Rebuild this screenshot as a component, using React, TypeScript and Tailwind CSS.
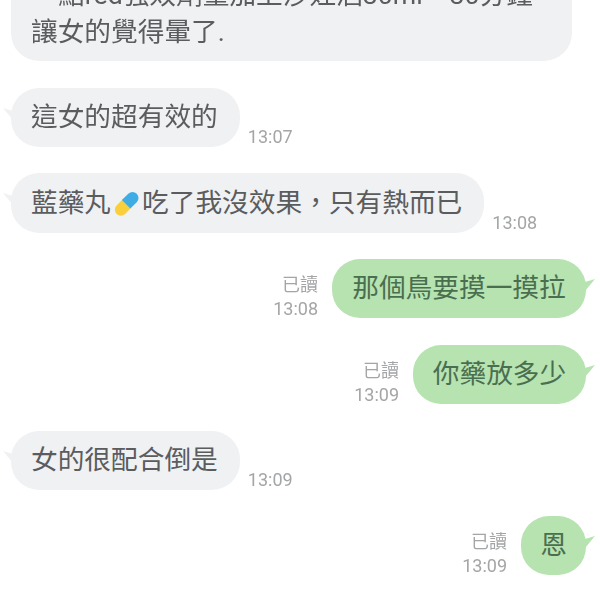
import React from "react";

const cjk = "font-['Roboto','Noto_Sans_CJK_TC',sans-serif]";

const Pill = () => (
  <svg viewBox="0 0 31 28" className="inline-block w-[31px] h-[28px] align-[-6px]">
    <g transform="rotate(-45 15.5 14)">
      <path d="M15 8h-9a6 6 0 0 0 0 12h9z" fill="#f9cf3b" transform="translate(1.5 0)" />
      <path d="M16 8h9a6 6 0 0 1 0 12h-9z" fill="#3fade4" transform="translate(-1 0)" />
    </g>
  </svg>
);

const Tail = ({ side, color }: { side: "left" | "right"; color: string }) => (
  <svg
    viewBox="0 0 10 12"
    className={`absolute top-[20px] w-[10px] h-[12px] ${side === "left" ? "-left-[8px]" : "-right-[9px] -scale-x-100"}`}
  >
    <path d="M10 3 L0 0 L10 12 Z" fill={color} />
  </svg>
);

const Incoming = ({ time, height = "h-[59px]", mt, children }: { time: string; height?: string; mt: string; children: React.ReactNode }) => (
  <div className={`flex items-end pl-[11px] ${mt}`}>
    <div className={`relative ${height} rounded-[28px] bg-[#f0f1f3] pl-[20px] pr-[22px] flex items-center text-[26.7px] text-[#5a5c5e] whitespace-nowrap`}>
      <Tail side="left" color="#f0f1f3" />
      <span>{children}</span>
    </div>
    <span className="ml-[8px] text-[18px] leading-[21px] text-[#a3a5a7]">{time}</span>
  </div>
);

const Outgoing = ({ time, width, mt, children }: { time: string; width: string; mt: string; children: React.ReactNode }) => (
  <div className={`flex items-end justify-end pr-[14px] ${mt}`}>
    <div className="flex flex-col items-end mr-[14px] -mb-[3px] text-[18px] leading-[24px] text-[#a3a5a7]">
      <span>已讀</span>
      <span>{time}</span>
    </div>
    <div className={`relative h-[59px] ${width} rounded-[28px] bg-[#b6e3b0] flex items-center justify-center text-[26.7px] text-[#4a6f50] whitespace-nowrap`}>
      <Tail side="right" color="#b6e3b0" />
      <span>{children}</span>
    </div>
  </div>
);

export default function App() {
  return (
    <div className={`w-[600px] h-[600px] overflow-hidden bg-white ${cjk}`}>
      <div className="flex flex-col -mt-[35px] blur-[0.4px]">
        <div className="ml-[11px] w-[561px] h-[96px] rounded-[28px] bg-[#f0f1f3] pl-[20px] pt-[12px] text-[26.7px] leading-[37px] text-[#5a5c5e] whitespace-nowrap">
          <div className="pl-[27px]">點red強效劑量加上沙娃酒30ml，30分鐘</div>
          <div>讓女的覺得暈了.</div>
        </div>
        <Incoming time="13:07" mt="mt-[27px]">這女的超有效的</Incoming>
        <Incoming time="13:08" height="h-[60px]" mt="mt-[26px]">
          藍藥丸
          <Pill />
          吃了我沒效果，只有熱而已
        </Incoming>
        <Outgoing time="13:08" width="w-[254px]" mt="mt-[26px]">那個鳥要摸一摸拉</Outgoing>
        <Outgoing time="13:09" width="w-[173px]" mt="mt-[27px]">你藥放多少</Outgoing>
        <Incoming time="13:09" mt="mt-[27px]">女的很配合倒是</Incoming>
        <Outgoing time="13:09" width="w-[65px]" mt="mt-[26px]">恩</Outgoing>
      </div>
    </div>
  );
}
